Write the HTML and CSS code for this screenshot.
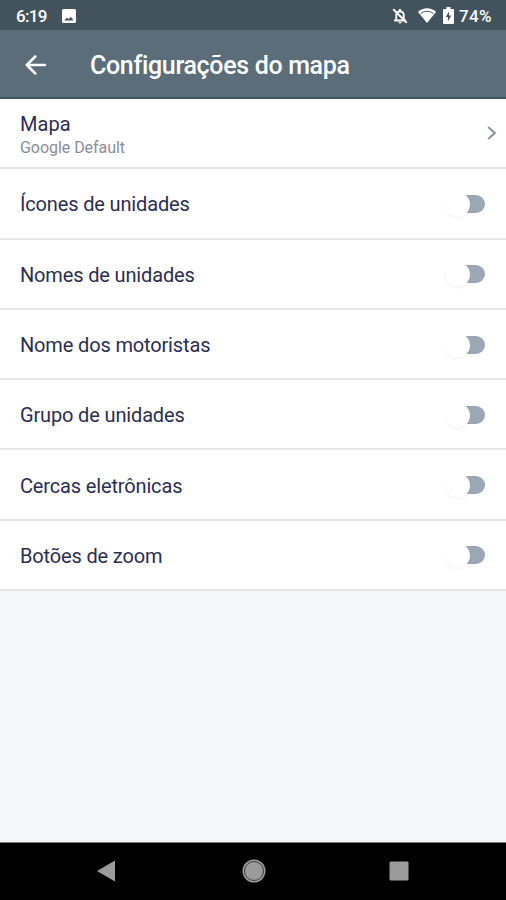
FILE: index.html
```html
<!DOCTYPE html>
<html lang="pt-BR">
<head>
<meta charset="utf-8">
<title>Configurações do mapa</title>
<link rel="stylesheet" href="styles.css">
</head>
<body>
<div class="status">
  <span class="time">6:19</span>
  <svg class="photo" width="14" height="14" viewBox="0 0 14 14"><path fill="#fff" fill-rule="evenodd" d="M1.5 0h11A1.5 1.5 0 0 1 14 1.5v11a1.5 1.5 0 0 1-1.500 1.500h-11A1.500 1.500 0 0 1 0 12.500v-11A1.500 1.500 0 0 1 1.500 0zM2.300 11.500h9.400L8.800 7.800 6.700 10.300 5 8.500z"/></svg>
  <span class="spacer"></span>
  <svg class="bell" width="18" height="18" viewBox="0 0 24 24"><path fill="none" stroke="#fff" stroke-width="2.500" d="M7 18V11c0-3 2-5 5-5s5 2 5 5v7M4 18h16M3 3l18 18"/><path fill="#fff" d="M10.500 2.500h3V6h-3zM10 20h4a2 2 0 0 1-4 0z"/></svg>
  <svg class="wifi" width="18" height="15" viewBox="0 0 18 15"><path fill="#fff" d="M0 4C5-1 13-1 18 4L9 15z"/><path fill="none" stroke="#43535d" stroke-width="1" d="M2.700 5.600C6.500 2.500 11.500 2.500 15.300 5.600"/></svg>
  <svg class="battery" width="11" height="17" viewBox="0 0 11 17"><path fill="#fff" d="M3.500 0h4v2H10a1 1 0 0 1 1 1v13a1 1 0 0 1-1 1H1a1 1 0 0 1-1-1V3a1 1 0 0 1 1-1h2.500z"/><path fill="#43535d" d="M6 4.500 2.800 10H5v4.200L8.300 8.600H6z"/></svg>
  <span class="percent">74%</span>
</div>
<header class="bar">
  <svg class="back" width="22" height="20" viewBox="0 0 22 20"><path fill="none" stroke="#fff" stroke-width="2.500" stroke-linecap="round" stroke-linejoin="round" d="M20 10H2M10.300 1.500 1.800 10l8.500 8.500"/></svg>
  <h1>Configurações do mapa</h1>
</header>
<main>
  <div class="row first">
    <div class="label"><div class="name">Mapa</div><div class="sub">Google Default</div></div>
    <svg class="chevron" width="10" height="14" viewBox="0 0 10 14"><path fill="none" stroke="#9095a0" stroke-width="2.200" d="M1.200 1 7.800 7l-6.600 6"/></svg>
  </div>
  <div class="row"><div class="name">Ícones de unidades</div><span class="switch"></span></div>
  <div class="row"><div class="name">Nomes de unidades</div><span class="switch"></span></div>
  <div class="row"><div class="name">Nome dos motoristas</div><span class="switch"></span></div>
  <div class="row"><div class="name">Grupo de unidades</div><span class="switch"></span></div>
  <div class="row"><div class="name">Cercas eletrônicas</div><span class="switch"></span></div>
  <div class="row"><div class="name">Botões de zoom</div><span class="switch"></span></div>
</main>
<nav class="nav">
  <svg width="18" height="22" viewBox="0 0 18 22"><path fill="#9b9b9b" d="M0 11 18 .500v21z"/></svg>
  <svg class="home" width="24" height="24" viewBox="0 0 24 24"><circle cx="12" cy="12" r="11.500" fill="#9b9b9b"/><circle cx="12" cy="12" r="9.500" fill="none" stroke="#3c3c3c" stroke-width="1"/></svg>
  <svg width="20" height="20" viewBox="0 0 20 20"><rect x=".5" y=".5" width="19" height="19" rx="1.500" fill="#9b9b9b"/></svg>
</nav>
</body>
</html>
```
FILE: styles.css
```css
* { box-sizing: border-box; }
body {
  margin: 0;
  width: 506px;
  height: 900px;
  display: flex;
  flex-direction: column;
  overflow: hidden;
  background: #f4f6f8;
  font-family: Roboto, "Liberation Sans", sans-serif;
}
svg { display: block; flex: none; }
.status {
  height: 30px;
  flex: none;
  display: flex;
  align-items: center;
  padding: 1px 14px 0 16px;
  background: #43535d;
  color: #fff;
  font-size: 17px;
  font-weight: 500;
}
.time { width: 46px; letter-spacing: -0.7px; }
.spacer { flex: 1; }
.bell { margin-right: 9px; }
.wifi { margin-right: 7px; }
.battery { margin-right: 5px; }
.percent { width: 33px; white-space: nowrap; letter-spacing: 0.3px; }
.bar {
  height: 69px;
  flex: none;
  display: flex;
  align-items: center;
  padding: 3px 0 0 25px;
  background: #5a6d78;
  border-bottom: 2px solid #405660;
}
.bar h1 {
  margin: 2px 0 0 43px;
  color: #fff;
  font-size: 25px;
  font-weight: 500;
  line-height: 30px;
  letter-spacing: -0.33px;
  white-space: nowrap;
}
.row {
  height: 70.3px;
  display: flex;
  align-items: center;
  justify-content: space-between;
  padding: 0 21px 0 20px;
  background: #fff;
  border-bottom: 2px solid #e6e7e9;
}
.row.first { padding-right: 9px; }
.name {
  margin-top: 2px;
  color: #2c2e50;
  font-size: 20px;
  line-height: 24px;
  letter-spacing: -0.15px;
}
.first .name { margin-top: 4px; letter-spacing: 0.1px; }
.sub {
  color: #8a8d99;
  font-size: 16px;
  line-height: 20px;
  margin-top: 2px;
  letter-spacing: -0.05px;
}
.switch {
  position: relative;
  width: 36px;
  height: 18px;
  margin-top: 1px;
  border-radius: 9px;
  background: linear-gradient(90deg, transparent 12px, #9ca7b5 12px);
}
.switch::before {
  content: "";
  position: absolute;
  left: -4px;
  top: -3px;
  width: 25px;
  height: 25px;
  border-radius: 50%;
  background: #fff;
  box-shadow: 0 1px 2px rgba(0, 0, 0, 0.06);
}
.nav {
  height: 58px;
  flex: none;
  margin-top: auto;
  display: flex;
  align-items: center;
  justify-content: space-between;
  padding: 0 97px 2px;
  background: #000;
  border-top: 1px solid #777;
}
.home { margin-left: 3px; }
```
